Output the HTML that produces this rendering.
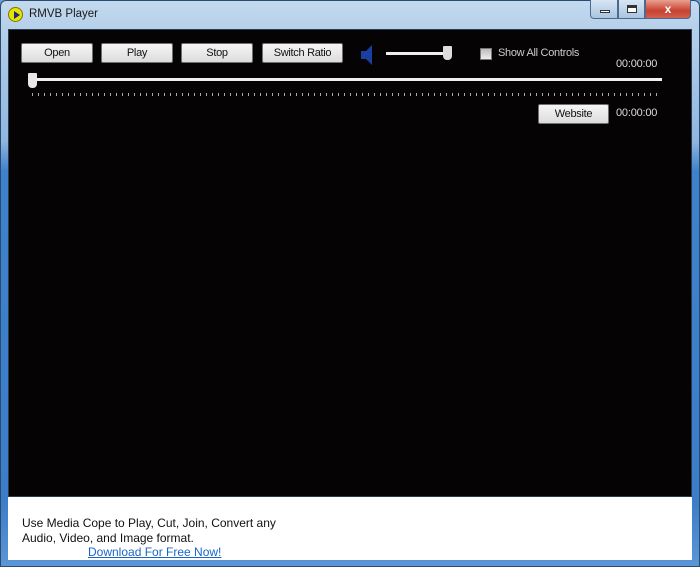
<!DOCTYPE html>
<html><head><style>
*{margin:0;padding:0;box-sizing:border-box}
body{width:700px;height:567px;overflow:hidden;font-family:"Liberation Sans",sans-serif;background:#6a9ed4;position:relative}
.frame{position:absolute;inset:0;border-radius:6px 6px 0 0;background:linear-gradient(180deg,#c3d9ef 0,#b5cfe9 30px,#8fb6e0 140px,#3f82cc 170px,#3b7dc8 500px,#5c97d6 567px);border:1px solid #2b4a70}
.title{position:absolute;left:29px;top:8px;font-size:11.5px;color:#1a1a1a}
.icon{position:absolute;left:8px;top:7px;width:15px;height:15px;border-radius:50%;background:#e8e200;border:1px solid #7a7a00}
.icon:after{content:"";position:absolute;left:5px;top:3px;border-left:6px solid #1a2a80;border-top:4px solid transparent;border-bottom:4px solid transparent}
.ctl{position:absolute;top:0;height:19px;border:1px solid #4a6a90;border-top:none}
.black{position:absolute;left:8px;top:29px;width:684px;height:468px;background:#050304;border:1px solid #2a3a50}
.white{position:absolute;left:8px;top:497px;width:684px;height:63px;background:#fff}
.btn{position:absolute;height:20px;background:linear-gradient(#f6f6f6,#dcdcdc);border:1px solid #707070;border-radius:2px;font-size:11px;letter-spacing:-0.3px;color:#111;text-align:center;line-height:18px}
.time{position:absolute;color:#ddd;font-size:11px;letter-spacing:-0.2px}
</style></head><body>
<div class="frame"></div>
<div class="icon"></div>
<div class="title">RMVB Player</div>
<div class="ctl" style="left:590px;width:28px;background:linear-gradient(#d8e6f4,#a9c3e0);border-radius:0 0 0 4px"><div style="position:absolute;left:9px;top:10px;width:10px;height:3px;background:#fff;border:1px solid #333"></div></div>
<div class="ctl" style="left:618px;width:27px;background:linear-gradient(#d8e6f4,#a9c3e0)"><div style="position:absolute;left:8px;top:5px;width:10px;height:8px;border:1px solid #333;border-top:3px solid #333;background:#fff"></div></div>
<div class="ctl" style="left:645px;width:46px;background:linear-gradient(#e8a090,#c84030 60%,#d06050);border-radius:0 0 4px 0;color:#fff;font-weight:bold;font-size:12px;text-align:center;line-height:18px">x</div>
<div class="black"></div>
<div class="btn" style="left:21px;top:43px;width:72px">Open</div>
<div class="btn" style="left:101px;top:43px;width:72px">Play</div>
<div class="btn" style="left:181px;top:43px;width:72px">Stop</div>
<div class="btn" style="left:262px;top:43px;width:81px">Switch Ratio</div>
<svg style="position:absolute;left:360px;top:44px" width="16" height="22"><path d="M1 7h5l6-6v20l-6-6H1z" fill="#1a3fa0"/></svg>
<div style="position:absolute;left:386px;top:52px;width:66px;height:3px;background:#eee"></div>
<div style="position:absolute;left:443px;top:46px;width:9px;height:14px;background:#ddd;border-radius:1px 1px 4px 4px"></div>
<div style="position:absolute;left:480px;top:48px;width:12px;height:12px;background:linear-gradient(#bbb,#eee);border:1px solid #777"></div>
<div style="position:absolute;left:498px;top:47px;font-size:11px;letter-spacing:-0.3px;color:#ccc">Show All Controls</div>
<div class="time" style="left:616px;top:58px">00:00:00</div>
<div style="position:absolute;left:30px;top:78px;width:632px;height:3px;background:#f0f0f0"></div>
<div style="position:absolute;left:28px;top:73px;width:9px;height:15px;background:#e8e8e8;border-radius:1px 1px 4px 4px"></div>
<div style="position:absolute;left:32px;top:93px;width:630px;height:3px;background:repeating-linear-gradient(90deg,#aaa 0 1px,transparent 1px 6px)"></div>
<div class="btn" style="left:538px;top:104px;width:71px">Website</div>
<div class="time" style="left:616px;top:107px">00:00:00</div>
<div class="white"></div>
<div style="position:absolute;left:22px;top:516px;font-size:12px;color:#111;line-height:15px">Use Media Cope to Play, Cut, Join, Convert any<br>Audio, Video, and Image format.</div>
<div style="position:absolute;left:88px;top:545px;font-size:12px;color:#1a66c8;text-decoration:underline">Download For Free Now!</div>
</body></html>
